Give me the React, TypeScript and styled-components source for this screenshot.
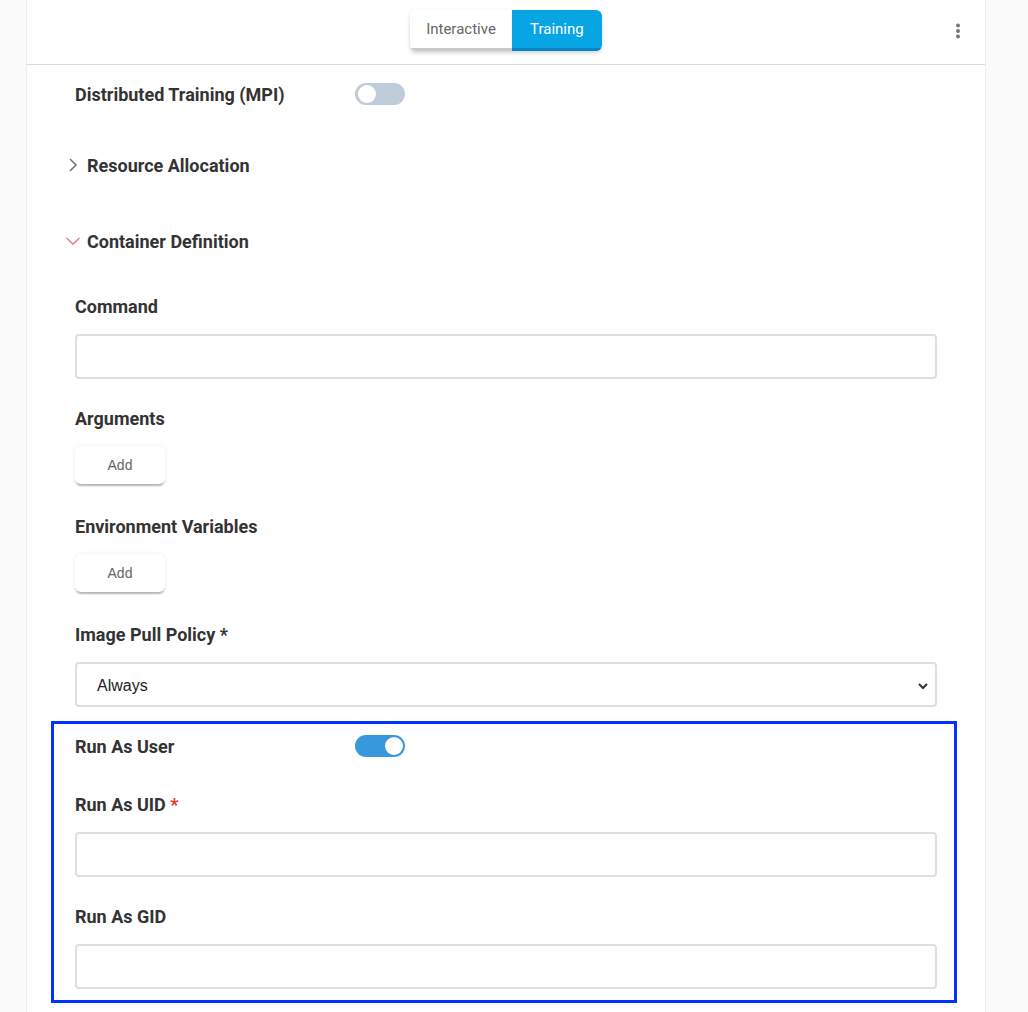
import React from "react";
import styled, { createGlobalStyle } from "styled-components";

const GlobalStyle = createGlobalStyle`
  html, body {
    margin: 0;
    padding: 0;
    background: #fafafa;
    font-family: Roboto, "Noto Sans", Arial, sans-serif;
    color: #333;
  }
  * { box-sizing: border-box; }
`;

const Page = styled.div`
  display: flex;
  padding-left: 26px;
  min-height: 1012px;
`;

const Panel = styled.div`
  width: 960px;
  background: #fff;
  border-left: 1px solid #eeeeee;
  border-right: 1px solid #eeeeee;
`;

const Header = styled.div`
  position: relative;
  height: 65px;
  border-bottom: 1px solid #dcdcdc;
  display: flex;
  justify-content: center;
  padding-top: 10px;
`;

const TabGroup = styled.div`
  display: flex;
  height: 41px;
  border-radius: 6px;
  overflow: hidden;
  box-shadow: 0 2px 4px rgba(0, 0, 0, 0.18);
`;

const Tab = styled.div<{ $active?: boolean }>`
  display: flex;
  align-items: center;
  justify-content: center;
  min-width: 90px;
  padding: 0 16px;
  font-size: 15px;
  color: ${(p) => (p.$active ? "#fff" : "#666")};
  background: ${(p) => (p.$active ? "#08a5e5" : "#fff")};
  border-bottom: 3px solid ${(p) => (p.$active ? "#0785c2" : "#c9c9c9")};
`;

const MenuButton = styled.div`
  position: absolute;
  right: 22px;
  top: 21px;
  width: 10px;
  height: 20px;
  display: flex;
  align-items: center;
  justify-content: center;
`;

const Content = styled.div`
  padding: 0 48px 20px;
  display: flex;
  flex-direction: column;
`;

const ToggleRow = styled.div<{ $mt: number }>`
  display: flex;
  align-items: center;
  height: 22px;
  margin-top: ${(p) => p.$mt}px;
`;

const RowLabel = styled.div`
  width: 280px;
  font-size: 18px;
  font-weight: 700;
  color: #333;
  line-height: 20px;
  padding-top: 2px;
`;

const Track = styled.div<{ $on?: boolean }>`
  position: relative;
  width: 50px;
  height: 22px;
  border-radius: 11px;
  background: ${(p) => (p.$on ? "#3898dc" : "#c1ccda")};
`;

const Knob = styled.div<{ $on?: boolean }>`
  position: absolute;
  top: 2px;
  left: ${(p) => (p.$on ? "30px" : "3px")};
  width: 18px;
  height: 18px;
  border-radius: 50%;
  background: #fff;
`;

const Section = styled.div<{ $mt: number }>`
  display: flex;
  align-items: center;
  height: 20px;
  margin-top: ${(p) => p.$mt}px;
  margin-left: -12px;
  font-size: 18px;
  font-weight: 700;
  color: #333;
`;

const ChevronBox = styled.div`
  flex-shrink: 0;
  width: 20px;
  height: 20px;
  margin-right: 4px;
  display: flex;
  align-items: center;
  justify-content: center;
`;

const Label = styled.div<{ $mt: number }>`
  font-size: 18px;
  font-weight: 700;
  line-height: 22px;
  color: #333;
  margin-top: ${(p) => p.$mt}px;
`;

const Req = styled.span`
  color: #e53935;
`;

const TextInput = styled.input`
  display: block;
  width: 100%;
  height: 45px;
  margin-top: 16px;
  border: 2px solid #dfdfdf;
  border-radius: 4px;
  background: #fff;
  outline: none;
  font-family: inherit;
  font-size: 16px;
  padding: 0 20px;
`;

const SelectBox = styled.div`
  display: flex;
  align-items: center;
  justify-content: space-between;
  height: 45px;
  margin-top: 16px;
  border: 2px solid #dfdfdf;
  border-radius: 4px;
  padding: 2px 4px 0 20px;
  font-family: "Liberation Sans", Arial, sans-serif;
  font-size: 16px;
  color: #222;
`;

const AddButton = styled.button`
  display: block;
  width: 90px;
  height: 38px;
  margin-top: 16px;
  border: none;
  border-radius: 6px;
  background: #fff;
  font-family: "Liberation Sans", Arial, sans-serif;
  font-size: 14px;
  color: #666;
  box-shadow: 0 3px 2px -1px rgba(0, 0, 0, 0.28), 0 0 4px rgba(0, 0, 0, 0.08);
`;

const Highlight = styled.div`
  margin: 14px -20px 0 -24px;
  border: 3px solid #0033ff;
  padding: 11px 17px 11px 21px;
  display: flex;
  flex-direction: column;
`;

const Chevron = ({ open }: { open?: boolean }) =>
  open ? (
    <svg width="16" height="10" viewBox="0 0 16 10">
      <polyline points="1.5,2 8,8.2 14.5,2" fill="none" stroke="#e98585" strokeWidth="1.6" />
    </svg>
  ) : (
    <svg width="10" height="14" viewBox="0 0 10 14">
      <polyline points="2,1 8,7 2,13" fill="none" stroke="#777" strokeWidth="1.6" />
    </svg>
  );

const Toggle = ({ on }: { on?: boolean }) => (
  <Track $on={on}>
    <Knob $on={on} />
  </Track>
);

export default function App() {
  return (
    <>
      <GlobalStyle />
      <Page>
        <Panel>
          <Header>
            <TabGroup>
              <Tab>Interactive</Tab>
              <Tab $active>Training</Tab>
            </TabGroup>
            <MenuButton>
              <svg width="6" height="18" viewBox="0 0 6 18">
                <circle cx="3" cy="3.5" r="2" fill="#777" />
                <circle cx="3" cy="9" r="2" fill="#777" />
                <circle cx="3" cy="14.5" r="2" fill="#777" />
              </svg>
            </MenuButton>
          </Header>
          <Content>
            <ToggleRow $mt={18}>
              <RowLabel>Distributed Training (MPI)</RowLabel>
              <Toggle />
            </ToggleRow>

            <Section $mt={50}>
              <ChevronBox>
                <Chevron />
              </ChevronBox>
              Resource Allocation
            </Section>

            <Section $mt={56}>
              <ChevronBox>
                <Chevron open />
              </ChevronBox>
              Container Definition
            </Section>

            <Label $mt={45}>Command</Label>
            <TextInput />

            <Label $mt={29}>Arguments</Label>
            <AddButton>Add</AddButton>

            <Label $mt={32}>Environment Variables</Label>
            <AddButton>Add</AddButton>

            <Label $mt={32}>Image Pull Policy *</Label>
            <SelectBox>
              <span>Always</span>
              <svg width="16" height="16" viewBox="0 0 16 16">
                <polyline points="4,6 8,10 12,6" fill="none" stroke="#333" strokeWidth="2" />
              </svg>
            </SelectBox>

            <Highlight>
              <ToggleRow $mt={0}>
                <RowLabel>Run As User</RowLabel>
                <Toggle on />
              </ToggleRow>

              <Label $mt={37}>
                Run As UID <Req>*</Req>
              </Label>
              <TextInput />

              <Label $mt={29}>Run As GID</Label>
              <TextInput />
            </Highlight>
          </Content>
        </Panel>
      </Page>
    </>
  );
}
